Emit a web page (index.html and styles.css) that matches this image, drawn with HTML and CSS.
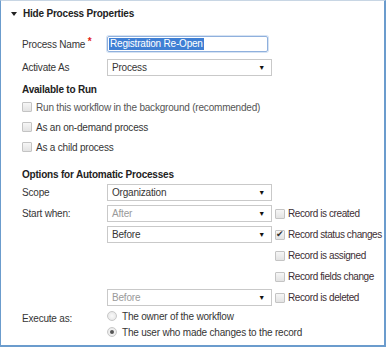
FILE: index.html
```html
<!DOCTYPE html>
<html lang="en">
<head>
    <meta charset="UTF-8">
    <title>Process Properties</title>
    <link rel="stylesheet" href="styles.css">
</head>
<body>
    <div class="panel">
        <div class="hdr"><span class="tri"></span>Hide Process Properties</div>

        <div class="row r-name">
            <div class="lbl">Process Name <span class="req">*</span></div>
            <div class="txt"><span class="sel">Registration Re-Open</span></div>
        </div>
        <div class="row r-act">
            <div class="lbl">Activate As</div>
            <div class="dd">Process<span class="arr">&#9660;</span></div>
        </div>

        <div class="sec s-avail">Available to Run</div>
        <div class="cbrow"><span class="cb"></span><span class="dim">Run this workflow in the background (recommended)</span></div>
        <div class="cbrow"><span class="cb"></span>As an on-demand process</div>
        <div class="cbrow"><span class="cb"></span>As a child process</div>

        <div class="sec s-opts">Options for Automatic Processes</div>
        <div class="row r21">
            <div class="lbl">Scope</div>
            <div class="dd">Organization<span class="arr">&#9660;</span></div>
        </div>
        <div class="row r21">
            <div class="lbl">Start when:</div>
            <div class="dd off">After<span class="arr">&#9660;</span></div>
            <div class="opt"><span class="cb"></span>Record is created</div>
        </div>
        <div class="row r21">
            <div class="lbl"></div>
            <div class="dd">Before<span class="arr">&#9660;</span></div>
            <div class="opt"><span class="cb on">&#10004;</span>Record status changes</div>
        </div>
        <div class="row r21">
            <div class="lbl"></div>
            <div class="gap"></div>
            <div class="opt"><span class="cb"></span>Record is assigned</div>
        </div>
        <div class="row r21">
            <div class="lbl"></div>
            <div class="gap"></div>
            <div class="opt"><span class="cb"></span>Record fields change</div>
        </div>
        <div class="row r21">
            <div class="lbl"></div>
            <div class="dd off">Before<span class="arr">&#9660;</span></div>
            <div class="opt"><span class="cb"></span>Record is deleted</div>
        </div>

        <div class="exec">
            <div class="lbl elbl">Execute as:</div>
            <div class="radios">
                <div class="rrow"><span class="rb"></span>The owner of the workflow</div>
                <div class="rrow"><span class="rb on"></span>The user who made changes to the record</div>
            </div>
        </div>
    </div>
</body>
</html>
```

FILE: styles.css
```css
body {
    margin: 0;
    font-family: "Liberation Sans", Arial, sans-serif;
    font-size: 10px;
    letter-spacing: -0.2px;
    color: #353535;
    background: #fff;
}
.panel {
    box-sizing: border-box;
    width: 386px;
    height: 347px;
    border: 1px solid #6b9ccd;
    border-top-color: #c8d6e4;
    border-width: 1px 2px 2px 1px;
    padding-left: 21px;
}
.hdr {
    height: 25px;
    display: flex;
    align-items: center;
    font-weight: bold;
    color: #222;
    margin-left: -11px;
}
.tri {
    width: 0;
    height: 0;
    border-left: 3px solid transparent;
    border-right: 3px solid transparent;
    border-top: 4px solid #222;
    margin-right: 6px;
    margin-top: 1px;
}
.row {
    display: flex;
    align-items: center;
    height: 18px;
    white-space: nowrap;
}
.r-name { margin-top: 9px; }
.r-act { margin-top: 5px; }
.r21 { height: 21px; }
.lbl {
    width: 85px;
    flex: none;
}
.req {
    color: #e2231a;
    font-weight: bold;
    position: relative;
    top: -3px;
}
.txt {
    box-sizing: border-box;
    width: 161px;
    height: 16px;
    border: 1px solid #8fb0dd;
    border-radius: 2px;
    box-shadow: 0 0 0 1px #d6e3f3;
    padding: 1px 1px;
    display: flex;
    align-items: center;
}
.sel {
    background: #3f7fd4;
    color: #fff;
    line-height: 12px;
    padding: 0 1px;
}
.dd {
    box-sizing: border-box;
    width: 165px;
    height: 17px;
    border: 1px solid #c9c9c9;
    background: #fff;
    padding-left: 4px;
    display: flex;
    align-items: center;
    justify-content: space-between;
    flex: none;
}
.dd.off { color: #9a9a9a; }
.arr {
    font-size: 7px;
    color: #111;
    margin-right: 6px;
}
.gap {
    width: 165px;
    flex: none;
}
.sec {
    font-weight: bold;
    color: #222;
    height: 15px;
    display: flex;
    align-items: center;
}
.s-avail { margin-top: 6px; }
.s-opts { margin-top: 9px; height: 16px; }
.cbrow {
    height: 20px;
    display: flex;
    align-items: center;
}
.cbrow .cb { margin-right: 4px; }
.dim { color: #555; }
.cb {
    box-sizing: border-box;
    width: 10px;
    height: 10px;
    border: 1px solid #c4c4c4;
    border-radius: 1px;
    background: linear-gradient(#f6f6f6, #e3e3e3);
    display: inline-flex;
    align-items: center;
    justify-content: center;
    flex: none;
}
.cb.on {
    font-size: 9px;
    color: #333;
    line-height: 1;
}
.opt {
    display: flex;
    align-items: center;
    margin-left: 3px;
    color: #402e34;
    letter-spacing: -0.4px;
}
.opt .cb { margin-right: 3px; }
.exec {
    display: flex;
}
.elbl {
    padding-top: 5px;
}
.radios {
    display: flex;
    flex-direction: column;
}
.rrow {
    height: 16px;
    display: flex;
    align-items: center;
}
.rb {
    box-sizing: border-box;
    width: 10px;
    height: 10px;
    border-radius: 50%;
    border: 1px solid #c8c8c8;
    background: radial-gradient(#fafafa, #e2e2e2);
    margin-right: 5px;
    display: inline-flex;
    align-items: center;
    justify-content: center;
}
.rb.on::after {
    content: "";
    width: 4px;
    height: 4px;
    border-radius: 50%;
    background: #555;
}
```
